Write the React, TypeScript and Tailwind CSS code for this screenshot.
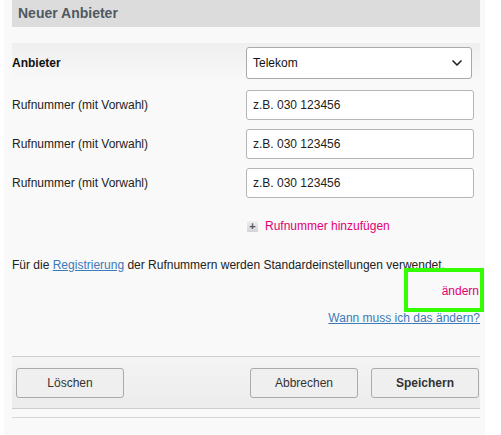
import { ChevronDown } from "lucide-react";

const font = { fontFamily: '"Liberation Sans", Arial, sans-serif' };

function PlusBox() {
  return (
    <span className="inline-flex h-[11px] w-[11px] items-center justify-center rounded-[1px] bg-gradient-to-b from-[#f0f0f0] to-[#d4d4d4] text-[11px] font-bold leading-none text-[#555]">
      +
    </span>
  );
}

function PhoneRow() {
  return (
    <div className="flex h-[39px] items-center justify-between">
      <span className="text-[12px] text-[#222]">Rufnummer (mit Vorwahl)</span>
      <input
        className="mr-[6px] h-[30px] w-[228px] rounded-[3px] border border-[#b5b5b5] bg-white px-[6px] text-[12px] text-[#222] outline-none"
        defaultValue="z.B. 030 123456"
      />
    </div>
  );
}

export default function App() {
  return (
    <div className="min-h-[435px] bg-white" style={font}>
      <div className="ml-[4px] w-[481px] bg-[#f9f9f9] pl-[8px] pr-[5px]">
        {/* Header */}
        <div className="flex h-[27px] items-center bg-[#dcdcdc] px-[6px]">
          <h1 className="text-[14px] font-bold text-[#4f5962]">Neuer Anbieter</h1>
        </div>

        {/* Formular */}
        <div className="mt-[16px] bg-gradient-to-b from-[#efefef] to-[#f9f9f9] to-[40px] pt-[4px]">
          <div className="flex h-[32px] items-center justify-between">
            <span className="text-[12px] font-bold text-[#111]">Anbieter</span>
            <div className="mr-[8px] flex h-[32px] w-[226px] items-center justify-between rounded-[3px] border border-[#a9a9a9] bg-white px-[6px]">
              <span className="text-[12px] text-[#111]">Telekom</span>
              <ChevronDown className="h-4 w-4 text-[#222]" strokeWidth={2.5} />
            </div>
          </div>
          <div className="mt-[6px]">
            <PhoneRow />
            <PhoneRow />
            <PhoneRow />
          </div>

          <div className="mt-[15px] flex items-center gap-[7px] pl-[235px]">
            <PlusBox />
            <span className="text-[12px] text-[#e20074]">Rufnummer hinzufügen</span>
          </div>

          <p className="mt-[21px] text-[12px] text-[#222]">
            Für die{" "}
            <a className="text-[#3d7ab8] underline">Registrierung</a> der Rufnummern werden Standardeinstellungen verwendet.
          </p>

          <div className="-mr-[4px] mt-[-6px] flex justify-end">
            <div className="flex h-[44px] w-[80px] items-center justify-end border-[4px] border-[#33ff00] pr-[1px] pt-[2px]">
              <span className="text-[12px] text-[#e20074]">ändern</span>
            </div>
          </div>

          <div className="mt-[-3px] flex justify-end">
            <a className="text-[12px] text-[#3d7ab8] underline">Wann muss ich das ändern?</a>
          </div>
        </div>

        {/* Buttons */}
        <div className="mt-[29px] border-y border-t-[#cfcfcf] border-b-[#cdcdcd] bg-gradient-to-b from-[#f4f4f4] to-[#ececec]">
          <div className="flex h-[51px] items-center justify-between pl-[4px] pr-[1px]">
            <button className="h-[30px] w-[108px] rounded-[3px] border border-[#ababab] bg-[#efefef] text-[12px] text-[#333]">
              Löschen
            </button>
            <div className="flex gap-[13px]">
              <button className="h-[30px] w-[108px] rounded-[3px] border border-[#ababab] bg-[#efefef] text-[12px] text-[#333]">
                Abbrechen
              </button>
              <button className="h-[30px] w-[108px] rounded-[3px] border border-[#ababab] bg-[#efefef] text-[12px] font-bold text-[#333]">
                Speichern
              </button>
            </div>
          </div>
        </div>
        <div className="mt-[8px] border-t border-[#d6d6d6]" />
        <div className="flex items-center gap-[7px] pt-[14px] pb-4">
          <PlusBox />
          <span className="text-[12px] text-[#e20074]">Weiteren Anbieter anlegen</span>
        </div>
      </div>
    </div>
  );
}
